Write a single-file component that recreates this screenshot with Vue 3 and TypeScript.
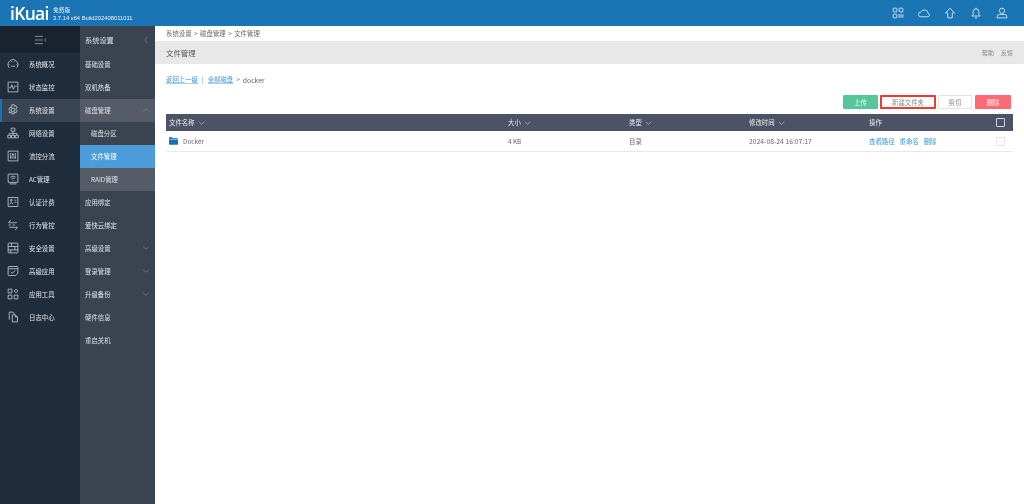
<template>
  <div class="page">
    <header class="topbar">
      <div class="logo">iKuai</div>
      <div class="version">
        <div>免费版</div>
        <div>3.7.14 x64 Build202408011011</div>
      </div>
      <div class="top-icons">
        <svg viewBox="0 0 16 16" class="top-icon">
          <rect x="1.5" y="1.5" width="5" height="5" rx="1" />
          <rect x="9.5" y="1.5" width="5" height="5" rx="1" />
          <rect x="1.5" y="9.5" width="5" height="5" rx="1" />
          <path d="M9.5 9.5v5M12 9.5v5M14.5 9.500v5" />
        </svg>
        <svg viewBox="0 0 16 16" class="top-icon">
          <path d="M3.500 13h9.500a2.300 2.300 0 0 0 .6-4.500A5.300 5.300 0 0 0 3.500 7 3 3 0 0 0 3.500 13z" />
        </svg>
        <svg viewBox="0 0 16 16" class="top-icon">
          <path d="M8 1.500 14 8h-3v6.500H5V8H2z" />
        </svg>
        <svg viewBox="0 0 16 16" class="top-icon">
          <path d="M8 1v1.500M8 2.500a3.800 3.800 0 0 1 3.800 3.800V10l1.700 2h-11l1.700-2V6.300A3.800 3.800 0 0 1 8 2.500zM6.500 14.500h3" />
        </svg>
        <svg viewBox="0 0 16 16" class="top-icon">
          <circle cx="8" cy="5" r="3.500" />
          <path d="M1.500 14.500v-1.500a3 3 0 0 1 3-3h7a3 3 0 0 1 3 3v1.500z" />
        </svg>
      </div>
    </header>

    <div class="body">
      <aside class="nav">
        <div class="nav-toggle">
          <svg viewBox="0 0 16 12" class="toggle-icon">
            <path d="M1 1.500h10M1 6h10M1 10.500h10M15 4 13 6l2 2" />
          </svg>
        </div>
        <div
          v-for="item in navItems"
          :key="item.label"
          class="nav-item"
          :class="{ active: item.active }"
        >
          <svg viewBox="0 0 16 16" class="nav-icon">
            <path :d="item.icon" />
          </svg>
          <span>{{ item.label }}</span>
        </div>
      </aside>

      <aside class="subnav">
        <div class="sub-head">
          <span>系统设置</span>
          <svg viewBox="0 0 8 10" class="chev"><path d="M5.500 1.500 2.500 5l3 3.500" /></svg>
        </div>
        <div
          v-for="item in subItems"
          :key="item.label"
          class="sub-item"
          :class="item.kind"
        >
          <span>{{ item.label }}</span>
          <svg v-if="item.arrow === 'up'" viewBox="0 0 10 8" class="chev"><path d="M1.500 5.500 5 2.500l3.500 3" /></svg>
          <svg v-if="item.arrow === 'down'" viewBox="0 0 10 8" class="chev"><path d="M1.500 2.500 5 5.500l3.500-3" /></svg>
        </div>
      </aside>

      <main class="main">
        <div class="crumbs">
          <span>系统设置</span><span class="gt">&gt;</span><span>磁盘管理</span><span class="gt">&gt;</span><span>文件管理</span>
        </div>
        <div class="title-bar">
          <span>文件管理</span>
          <span class="title-links"><span>帮助</span><span>反馈</span></span>
        </div>
        <div class="path-row">
          <a>返回上一级</a>
          <span class="sep">|</span>
          <a>全部磁盘</a>
          <span class="gt">&gt;</span>
          <span class="folder-name">docker</span>
        </div>
        <div class="actions">
          <button class="btn green">上传</button>
          <button class="btn outlined">新建文件夹</button>
          <button class="btn plain">剪切</button>
          <button class="btn red">删除</button>
        </div>
        <div class="table">
          <div class="row head">
            <div v-for="col in columns" :key="col" class="cell">
              {{ col }}
              <svg viewBox="0 0 10 8" class="sort"><path d="M1 2 5 6l4-4" /></svg>
            </div>
            <div class="cell">操作</div>
            <div class="cell check-cell"><span class="check dark"></span></div>
          </div>
          <div class="row">
            <div class="cell name-cell">
              <svg viewBox="0 0 12 10" class="folder">
                <path d="M0 1a1 1 0 0 1 1-1h3l1.200 1.300H11a1 1 0 0 1 1 1V9a1 1 0 0 1-1 1H1a1 1 0 0 1-1-1z" fill="#1a6fb0" />
                <path d="M0 2.600h12v.8H0z" fill="#bcdcf2" />
              </svg>
              <span>Docker</span>
            </div>
            <div class="cell">4 KB</div>
            <div class="cell">目录</div>
            <div class="cell date">2024-08-24 16:07:17</div>
            <div class="cell ops"><a>查看路径</a><a>重命名</a><a>删除</a></div>
            <div class="cell check-cell"><span class="check"></span></div>
          </div>
        </div>
      </main>
    </div>
  </div>
</template>

<script setup lang="ts">
const navItems = [
  { label: "系统概况", icon: "M3 13a6.500 6.500 0 1 1 10 0M3.500 9H2M14 9h-1.500M6 4.500l.5 1M10 4.500l-.5 1M5.500 11h5" },
  { label: "状态监控", icon: "M1.500 1.500h13v13h-13zM3 9h2l1.500-4 2 6 1.500-4h3" },
  { label: "系统设置", active: true, icon: "M6.500 1h3l.5 2 2-.7 1.500 2.700-1.500 1.500v1l1.500 1.500-1.500 2.700-2-.7-.5 2h-3l-.5-2-2 .7L2.500 11 4 9.500v-1L2.500 7 4 4.300l2 .7zM8 5.500a2.500 2.500 0 1 0 0 5 2.500 2.500 0 0 0 0-5z" },
  { label: "网络设置", icon: "M5.500 1.500h5v4h-5zM1 11h4v3.500H1zM6 11h4v3.500H6zM11 11h4v3.500h-4zM8 5.500V11M3 11V8.500h10V11" },
  { label: "流控分流", icon: "M1.500 1.500h13v13h-13zM5 4v8M8 4v8M11 4v8M3.800 9.500h2.400M6.800 6h2.400M9.800 9.500h2.400" },
  { label: "AC管理", icon: "M1.500 1.500h13v11h-13zM3.500 14.500h9M4.500 5.500a5.500 5.500 0 0 1 7 0M6 7.500a3 3 0 0 1 4 0M7.500 9.500h1" },
  { label: "认证计费", icon: "M1.500 2h13v12h-13zM5 4.500h1.500V7H5zM3.500 11c0-2.500 4.500-2.500 4.500 0M10 5.500h2.500M10 8.500h2.500" },
  { label: "行为管控", icon: "M5 1.500 2 5h11M11 14.500l3-3.500H3M2 8h3M7.500 8h3" },
  { label: "安全设置", icon: "M2.500 1.500h11a1 1 0 0 1 1 1v11a1 1 0 0 1-1 1h-11a1 1 0 0 1-1-1v-11a1 1 0 0 1 1-1zM1.500 6h13M1.500 10.500h13M6 1.500V6M10.500 6v4.500M5 10.500v4" },
  { label: "高级应用", icon: "M2.500 2h11a1 1 0 0 1 1 1v8l-3 3h-9a1 1 0 0 1-1-1V3a1 1 0 0 1 1-1zM1.500 5h13M5 9l2 2 4-3.500" },
  { label: "应用工具", icon: "M1.500 1.500h5v5h-5zM1.500 9.500h5v5h-5zM9.500 9.500h5v5h-5zM9.500 4 12 1.500 14.500 4 12 6.500z" },
  { label: "日志中心", icon: "M3 11.500V1.500h5l2 2.500M7 5h4l3 3v6.500H7zM11 5v3h3" },
];

const subItems = [
  { label: "基础设置" },
  { label: "双机热备" },
  { label: "磁盘管理", kind: "open", arrow: "up" },
  { label: "磁盘分区", kind: "child dark-child" },
  { label: "文件管理", kind: "child current" },
  { label: "RAID管理", kind: "child open" },
  { label: "应用绑定" },
  { label: "爱快云绑定" },
  { label: "高级设置", arrow: "down" },
  { label: "登录管理", arrow: "down" },
  { label: "升级备份", arrow: "down" },
  { label: "硬件信息" },
  { label: "重启关机" },
];

const columns = ["文件名称", "大小", "类型", "修改时间"];
</script>

<style>
html,
body {
  margin: 0;
  background: #fff;
}
</style>

<style scoped>
.page {
  width: 1024px;
  height: 504px;
  overflow: hidden;
  display: flex;
  flex-direction: column;
  font-family: "Noto Sans CJK SC", "Liberation Sans", sans-serif;
  font-size: 6.4px;
  color: #666;
  filter: blur(0.25px);
}

.topbar {
  height: 26px;
  flex: none;
  display: flex;
  align-items: center;
  background: #1b75b5;
  color: #eef5fa;
}

.logo {
  margin-left: 10px;
  width: 43px;
  font-family: "Open Sans", sans-serif;
  font-size: 17.5px;
  font-weight: 600;
  letter-spacing: -0.7px;
  line-height: 26px;
  color: #fff;
}

.version {
  font-family: "Liberation Sans", "Noto Sans CJK SC", sans-serif;
  font-size: 5.8px;
  line-height: 7.5px;
  margin-top: 3px;
}

.top-icons {
  margin-left: auto;
  margin-right: 16px;
  display: flex;
  gap: 14px;
}

.top-icon {
  width: 12px;
  height: 12px;
  fill: none;
  stroke: #e8f1f8;
  stroke-width: 1.1;
}

.body {
  flex: 1;
  display: flex;
  min-height: 0;
}

.nav {
  width: 80px;
  flex: none;
  background: #1f2d3d;
  color: #e4e7ea;
}

.nav-toggle {
  height: 27px;
  display: flex;
  align-items: center;
  justify-content: center;
  background: #19232f;
}

.toggle-icon {
  width: 13px;
  height: 10px;
  fill: none;
  stroke: #9aa1a9;
  stroke-width: 1;
}

.nav-item {
  height: 23px;
  display: flex;
  align-items: center;
  gap: 10px;
  padding-left: 7px;
  padding-bottom: 1px;
  box-sizing: border-box;
}

.nav-item.active {
  background: #3a4553;
  border-left: 2px solid #1b75b5;
  padding-left: 5px;
}

.nav-icon {
  width: 12px;
  height: 12px;
  flex: none;
  fill: none;
  stroke: #c4c9cf;
  stroke-width: 1.1;
}

.subnav {
  width: 75px;
  flex: none;
  background: #3a4350;
  color: #dfe2e5;
}

.sub-head {
  height: 27px;
  display: flex;
  align-items: center;
  justify-content: space-between;
  padding: 0 5px;
  font-size: 7.2px;
}

.sub-item {
  height: 23px;
  display: flex;
  align-items: center;
  justify-content: space-between;
  padding: 0 5px 1px;
  box-sizing: border-box;
}

.sub-item.open {
  background: #555c67;
}

.sub-item.child {
  padding-left: 11px;
}

.sub-item.dark-child {
  background: #3a4350;
}

.sub-item.current {
  background: #4b9cd8;
  color: #fff;
}

.chev {
  width: 8px;
  height: 8px;
  fill: none;
  stroke: #7f8791;
  stroke-width: 0.8;
}

.main {
  flex: 1;
  min-width: 0;
  background: #fff;
}

.crumbs {
  height: 15px;
  display: flex;
  align-items: center;
  gap: 2.500px;
  padding-left: 11px;
}

.title-bar {
  height: 23px;
  display: flex;
  align-items: center;
  justify-content: space-between;
  padding: 0 11px 1px;
  box-sizing: border-box;
  background: #e8e8e8;
  font-size: 7.400px;
  color: #555;
}

.title-links {
  display: flex;
  gap: 7px;
  font-size: 6px;
  color: #888;
}

.path-row {
  height: 31px;
  display: flex;
  align-items: center;
  gap: 3px;
  padding-left: 11px;
}

.folder-name {
  font-size: 6.800px;
}

a {
  color: #3a95d6;
}

.path-row a {
  text-decoration: underline;
  text-decoration-color: #a8d0ec;
}

.sep {
  color: #3a95d6;
  margin: 0 1px;
}

.actions {
  height: 15px;
  display: flex;
  justify-content: flex-end;
  gap: 2px;
  padding-right: 13px;
}

.btn {
  height: 14px;
  padding: 0;
  border: 1px solid transparent;
  border-radius: 1px;
  font: inherit;
  box-sizing: border-box;
}

.btn.green {
  width: 35px;
  background: #55c89b;
  color: #f2fbf7;
}

.btn.outlined {
  width: 56px;
  background: #fff;
  border: 2px solid #ee3b33;
  color: #888;
}

.btn.plain {
  width: 34px;
  background: #fff;
  border-color: #e4e4e4;
  color: #888;
}

.btn.red {
  width: 36px;
  margin-left: 1px;
  background: #fb6a75;
  color: #fff2f3;
}

.table {
  margin: 4px 11px 0;
}

.row {
  height: 21px;
  display: grid;
  grid-template-columns: 339px 121px 120px 120px 1fr 25px;
  align-items: center;
  border-bottom: 1px solid #e8e8e8;
  box-sizing: border-box;
}

.row.head {
  height: 17px;
  background: #4d5366;
  border-bottom: 0;
  color: #eceef1;
}

.cell {
  display: flex;
  align-items: center;
  gap: 3px;
  padding-left: 3px;
}

.date {
  font-size: 6.800px;
}

.sort {
  width: 7px;
  height: 6px;
  fill: none;
  stroke: #c6c9d2;
  stroke-width: 0.9;
}

.name-cell {
  gap: 5px;
}

.folder {
  width: 9px;
  height: 8px;
}

.ops {
  gap: 5px;
}

.check-cell {
  justify-content: center;
  padding-left: 0;
}

.check {
  width: 7px;
  height: 7px;
  border: 1px solid #e4e4e4;
  border-radius: 1px;
  background: #fff;
}

.check.dark {
  border-color: #d5d7dd;
  background: transparent;
}
</style>
